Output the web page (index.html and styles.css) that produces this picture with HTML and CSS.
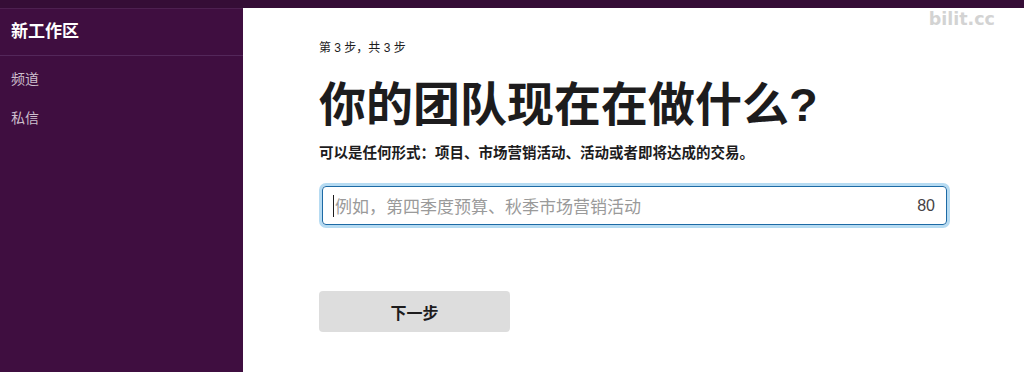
FILE: index.html
```html
<!DOCTYPE html>
<html lang="zh-CN">
<head>
    <meta charset="UTF-8">
    <meta name="viewport" content="width=device-width, initial-scale=1.0">
    <title>新工作区</title>
    <link rel="stylesheet" href="styles.css">
</head>
<body>
    <div class="topbar"></div>
    <div class="workspace">
        <aside class="sidebar">
            <div class="sidebar-header">新工作区</div>
            <ul class="sidebar-list">
                <li>频道</li>
                <li>私信</li>
            </ul>
        </aside>
        <main class="main">
            <p class="step">第 3 步，共 3 步</p>
            <h1 class="title">你的团队现在在做什么?</h1>
            <p class="subtitle">可以是任何形式：项目、市场营销活动、活动或者即将达成的交易。</p>
            <div class="field-wrap">
                <div class="field">
                    <span class="caret"></span>
                    <span class="placeholder">例如，第四季度预算、秋季市场营销活动</span>
                    <span class="counter">80</span>
                </div>
            </div>
            <button class="next-btn">下一步</button>
        </main>
    </div>
    <div class="watermark">bilit.cc</div>
</body>
</html>
```

FILE: styles.css
```css
html, body {
    height: 100%;
}
body {
    margin: 0;
    font-family: "Liberation Sans", "Noto Sans CJK SC", sans-serif;
    color: #1d1c1d;
    background-color: #ffffff;
    display: flex;
    flex-direction: column;
    overflow: hidden;
}
.topbar {
    height: 8px;
    background-color: #350d36;
    flex-shrink: 0;
}
.workspace {
    flex: 1;
    display: flex;
}
.sidebar {
    width: 243px;
    background-color: #3f0e40;
    border-top: 1px solid #4d2050;
    flex-shrink: 0;
}
.sidebar-header {
    height: 46px;
    line-height: 46px;
    padding-left: 11px;
    color: #ffffff;
    font-size: 17px;
    font-weight: bold;
    border-bottom: 1px solid #53275a;
}
.sidebar-list {
    list-style: none;
    margin: 0;
    padding: 9px 0 0 11px;
}
.sidebar-list li {
    height: 39px;
    line-height: 28px;
    color: #cdbfcd;
    font-size: 14px;
}
.main {
    flex: 1;
    padding: 32px 0 0 76px;
}
.step {
    margin: 0;
    font-size: 12px;
    line-height: 16px;
}
.title {
    margin: 21px 0 0 0;
    font-size: 47px;
    line-height: 56px;
    font-weight: bold;
}
.subtitle {
    margin: 10px 0 0 0;
    font-size: 14.5px;
    line-height: 20px;
    font-weight: bold;
}
.field-wrap {
    margin-top: 20px;
    width: 625px;
    border: 3px solid #b6dbf2;
    border-radius: 7px;
}
.field {
    height: 37px;
    border: 1px solid #1d6aa5;
    border-radius: 4px;
    display: flex;
    align-items: center;
    padding: 0 11px 0 10px;
}
.caret {
    width: 1px;
    height: 22px;
    background-color: #1d1c1d;
    margin-right: 1px;
}
.placeholder {
    flex: 1;
    color: #9a9a9a;
    font-size: 17px;
}
.counter {
    color: #454245;
    font-size: 16px;
}
.next-btn {
    display: block;
    margin-top: 63px;
    width: 191px;
    height: 41px;
    border: none;
    border-radius: 4px;
    background-color: #dddddd;
    color: #1d1c1d;
    font-family: inherit;
    font-size: 16px;
    font-weight: bold;
}
.watermark {
    position: absolute;
    top: 9px;
    right: 29px;
    font-family: "DejaVu Sans", sans-serif;
    font-weight: bold;
    font-size: 17.5px;
    color: #d3d3d3;
}
```
